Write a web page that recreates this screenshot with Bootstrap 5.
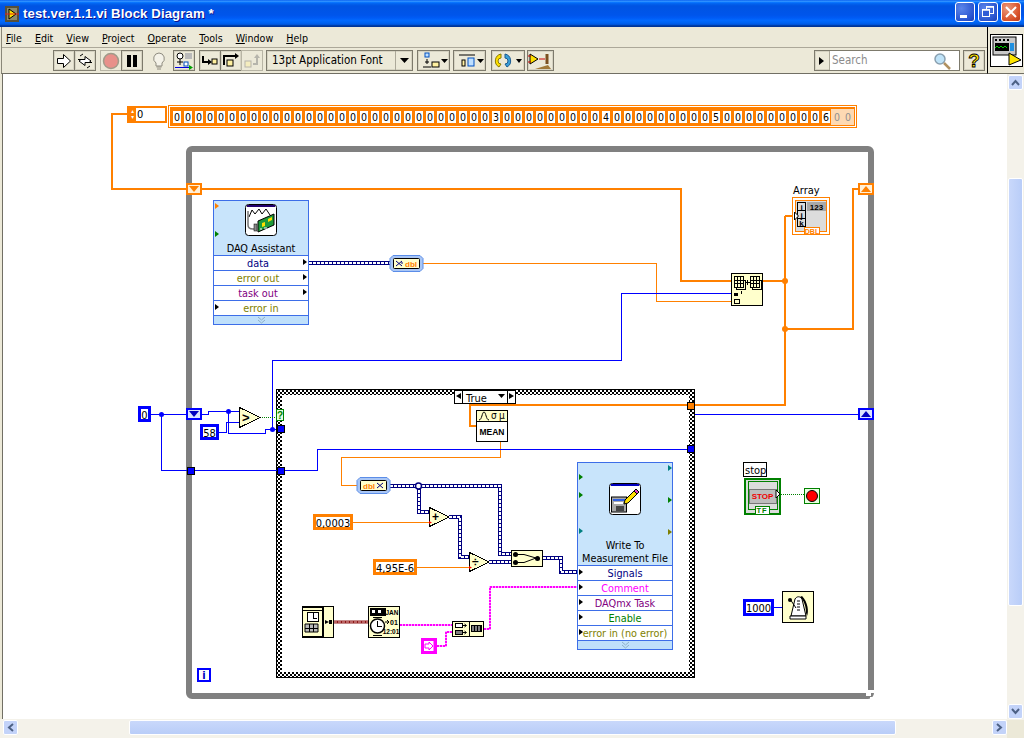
<!DOCTYPE html>
<html lang="en">
<head>
<meta charset="UTF-8">
<title>test.ver.1.1.vi Block Diagram *</title>
<link rel="stylesheet" href="https://cdn.jsdelivr.net/npm/bootstrap@5.3.0/dist/css/bootstrap.min.css">
<style>
  html, body { margin: 0; height: 100%; overflow: hidden; background: #ece9d8; }
  body { font-family: "DejaVu Sans Condensed", "Liberation Sans", Arial, sans-serif; font-size: 10.5px; color: #000; }
  .lv-window { width: 1024px; height: 738px; }

  /* title bar */
  .lv-title { height: 27px; padding: 0 3px 0 5px; background: linear-gradient(180deg,#0058ee 0%,#3593ff 4%,#288eff 6%,#127dff 8%,#036ffc 10%,#0262ee 14%,#0057e5 20%,#0054e3 24%,#0055eb 56%,#005bf5 66%,#026afe 76%,#0062ef 86%,#0052d6 92%,#0040ab 94%,#003092 100%); }
  .lv-title-text { font-family: "Liberation Sans", Arial, sans-serif; color: #fff; font-weight: 700; font-size: 13.2px; margin-left: 4px; text-shadow: 1px 1px 0 #0f1089; letter-spacing: .1px; }
  .win-btns { gap: 3px; margin-top: -3px; }
  .win-btn { width: 20px; height: 20px; border: 1px solid #fff; border-radius: 3px; background: radial-gradient(circle at 30% 30%, #5b85ea, #2a55d0 70%, #1c3eb4); }
  .win-btn-close { background: radial-gradient(circle at 30% 30%, #ea9a7d, #d9532c 65%, #b8381a); }

  /* menu and toolbar */
  .lv-chrome { border-left: 1px solid #8a8778; border-bottom: 1px solid #716f64; margin-left: 1px; }
  .lv-menu { height: 21px; padding: 3px 0 0 4px; gap: 13px; font-size: 10.6px; border-bottom: 1px solid #aca899; }
  .lv-tools { height: 25px; padding: 2px 0 0 51px; }
  .tb-btn { width: 22px; height: 21px; border: 1px solid #7d7a6c; box-shadow: inset 0 0 0 1px #d6d3c2; margin-right: -1px; flex: none; overflow: hidden; }
  .tb-flat { border-color: #b8b5a5; box-shadow: none; }
  .tb-none { border-color: transparent; box-shadow: none; }
  .tb-wide { width: 33px; }
  .tb-w34 { width: 34px; }
  .tb-w27 { width: 27px; }
  .sp3 { margin-left: 3px; } .sp4 { margin-left: 4px; } .sp5 { margin-left: 5px; } .sp6 { margin-left: 6px; }
  .tb-font { width: 147px; padding-left: 5px; font-size: 11.5px; }
  .tb-font-arrow { width: 17px; height: 100%; border-left: 1px solid #aca899; margin-left: auto; }
  .tb-search { width: 146px; margin-left: 261px; }
  .tb-search-tab { width: 15px; border-right: 1px solid #aca899; }
  .tb-search-field { background: #fff; color: #8b8b8b; padding-left: 2px; font-size: 11.5px; }
  .lv-pane { width: 37px; border-left: 1px solid #000; padding: 7px 0 0 2px; border-bottom: 1px solid #716f64; }
  .lv-pane-box { width: 33px; height: 33px; background: #fff; border: 1px solid #000; }

  /* scroll bars */
  .sb-track { background: #f4f2ea; }
  .sb-v { width: 17px; padding: 1px 1px 0 1px; }
  .sb-h { height: 19px; padding: 1px 0 0 3px; }
  .sb-arrow { width: 15px; height: 15px; flex: none; border-radius: 2px; border: 1px solid #fff; background: #c3d3f9; }
  .sb-thumb-v { width: 15px; height: 428px; margin-top: 88px; border-radius: 2px; border: 1px solid #fff; background: linear-gradient(90deg,#c9d8fb,#b9cdf8); }
  .sb-thumb-h { width: 767px; height: 15px; margin-left: 111px; border-radius: 2px; border: 1px solid #fff; background: linear-gradient(180deg,#c9d8fb,#b9cdf8); }
  .sb-corner { width: 17px; background: #ece9d8; }

  /* diagram: a free canvas, children use screen coordinates */
  .lv-canvas { background: #fff; border-left: 1px solid #716f64; margin-left: 2px; }
  .lv-layer { position: absolute; left: -3px; top: -74px; width: 1024px; height: 738px; }
  .lv-layer svg { display: block; }
  .lv-layer text { font-family: "DejaVu Sans Condensed", "Liberation Sans", Arial, sans-serif; font-size: 11px; }
  .lv-layer text.sm { font-family: "Liberation Sans", Arial, sans-serif; font-weight: 700; }

  .w1 { fill: none; stroke-width: 1; shape-rendering: crispEdges; }
  .w-blue { stroke: #0000ff; }
  .w-or { stroke: #ff8000; }
  .w-or2 { fill: none; stroke: #ff8000; stroke-width: 2; shape-rendering: crispEdges; }
  .w-navy { fill: none; stroke: #00007f; stroke-width: 4; shape-rendering: crispEdges; }
  .w-navy-in { fill: none; stroke: #fff; stroke-width: 2; stroke-dasharray: 3 1; shape-rendering: crispEdges; }
  .w-pink-bg { fill: none; stroke: #ffa8ff; stroke-width: 2; shape-rendering: crispEdges; }
  .w-pink { fill: none; stroke: #ff00ff; stroke-width: 2; stroke-dasharray: 2 1; shape-rendering: crispEdges; }
  .w-green { fill: none; stroke: #008000; stroke-width: 1; stroke-dasharray: 1 1; shape-rendering: crispEdges; }
  .vi { fill: #ffffcc; stroke: #000; stroke-width: 1; shape-rendering: crispEdges; }
  .ln { fill: none; stroke: #000; stroke-width: 1; shape-rendering: crispEdges; }
  .k-blue { fill: #fff; stroke: #0000ff; stroke-width: 3; shape-rendering: crispEdges; }
  .k-or { fill: #fff; stroke: #ff8000; stroke-width: 3; shape-rendering: crispEdges; }

  #arr-index { position: absolute; left: 127px; top: 106px; width: 40px; height: 17px; border: 2px solid #ff8000; background: #fff; }
  .arr-spin { width: 7px; background: #ff8000; color: #fff; font-size: 6px; line-height: 6px; }
  .arr-val { padding-left: 1px; font-size: 11px; line-height: 13px; }
  #arr-strip { position: absolute; left: 168px; top: 105px; width: 689px; height: 23px; border: 1px solid #ff8000; padding: 1px; background: #fff; }
  .arr-inner { height: 100%; background: #ff8000; padding: 4px 0 0 3px; gap: 3px; }
  .arr-cell { width: 8px; height: 12px; flex: none; background: #fff; font-size: 10.5px; line-height: 12px; text-align: center; }
  .arr-cell-dim { background: #fdd9b3; color: #8f8f8f; box-shadow: 0 0 0 2px #fdd9b3; }

  .ex-node { position: absolute; width: 96px; border: 1px solid #3d6ee8; background: #c8e4fb; }
  #ex-daq { left: 213px; top: 200px; }
  #ex-write { left: 577px; top: 462px; }
  .ex-head { position: relative; text-align: center; font-size: 10.8px; line-height: 13px; white-space: nowrap; }
  #ex-daq .ex-head { height: 54px; padding-top: 41px; }
  #ex-write .ex-head { height: 102px; padding-top: 76px; }
  .ex-row { position: relative; height: 15px; background: #fff; border-top: 1px solid #3d6ee8; font-size: 10.8px; line-height: 16px; text-align: center; white-space: nowrap; }
  .ex-row-out { padding-right: 6px; }
  .ex-foot { height: 9px; border-top: 1px solid #3d6ee8; background: #bfe0fb; }
  .t-navy { color: #00007f; } .t-olive { color: #7f7f00; } .t-purple { color: #7f007f; } .t-magenta { color: #ff00ff; } .t-green { color: #008000; }
  .tri-l, .tri-r { position: absolute; top: 3px; width: 0; height: 0; border-top: 3px solid transparent; border-bottom: 3px solid transparent; }
  .tri-l { left: 1px; border-left: 4px solid #000; }
  .tri-r { right: 1px; border-left: 4px solid #000; }
</style>
</head>
<body>
<div class="lv-window d-flex flex-column">

  <!-- title bar -->
  <div class="lv-title d-flex align-items-center">
    <svg width="14" height="16" viewBox="0 0 14 16"><rect width="14" height="16" fill="#57503a"/><rect x="2" y="2" width="10" height="12" fill="#8a8a70"/><path d="M4 3l7 5-7 5z" fill="#ffe600" stroke="#000"/><path d="M0 8h14" stroke="#e02020"/></svg>
    <span class="lv-title-text">test.ver.1.1.vi Block Diagram *</span>
    <div class="win-btns d-flex ms-auto">
      <div class="win-btn"><svg width="18" height="18"><rect x="4" y="12" width="7" height="3" fill="#fff"/></svg></div>
      <div class="win-btn"><svg width="18" height="18" fill="none" stroke="#fff"><rect x="7.500" y="3.500" width="7" height="7" stroke-width="1"/><rect x="3.500" y="6.500" width="7" height="7" fill="#2f5bd6" stroke-width="1"/><path d="M7 4h8M4 7h7" stroke-width="1.500"/></svg></div>
      <div class="win-btn win-btn-close"><svg width="18" height="18" fill="none" stroke="#fff" stroke-width="2"><path d="M4 4l10 10M14 4L4 14"/></svg></div>
    </div>
  </div>

  <!-- menu and toolbar with the connector pane at the right -->
  <div class="d-flex">
    <div class="lv-chrome flex-grow-1">
      <div class="lv-menu d-flex align-items-center">
        <span><u>F</u>ile</span><span><u>E</u>dit</span><span><u>V</u>iew</span><span><u>P</u>roject</span><span><u>O</u>perate</span><span><u>T</u>ools</span><span><u>W</u>indow</span><span><u>H</u>elp</span>
      </div>
      <div class="lv-tools d-flex">
        <div class="tb-btn"><svg width="20" height="20"><path d="M3.500 7.500h6v-4l7 6.500-7 6.500v-4h-6z" fill="#fff" stroke="#000"/></svg></div>
        <div class="tb-btn"><svg width="20" height="20"><path d="M3 8.500h7v-3l6 4.500-2 1.500M17 11.500h-7v3l-6-4.500 2-1.500" fill="#fff" stroke="#000"/><path d="M5 5l3-2M15 15l-3 2" stroke="#000"/></svg></div>
        <div class="tb-btn tb-flat sp5"><svg width="20" height="20"><circle cx="10" cy="10" r="7.500" fill="#e8908a" stroke="#a09b8a" stroke-width="1.500"/></svg></div>
        <div class="tb-btn"><svg width="20" height="20"><rect x="5" y="4" width="4" height="12" fill="#000"/><rect x="11" y="4" width="4" height="12" fill="#000"/></svg></div>
        <div class="tb-btn tb-none sp6"><svg width="20" height="20"><path d="M10 2a5.500 5.500 0 0 0-3 10v3h6v-3a5.500 5.500 0 0 0-3-10z" fill="#f4f2e8" stroke="#8f8c80"/><path d="M7.500 16h5M8 18h4" stroke="#8f8c80"/></svg></div>
        <div class="tb-btn sp4"><svg width="20" height="20"><circle cx="6" cy="5" r="3" fill="#fff" stroke="#000"/><path d="M6 8v6M3 11h6" stroke="#000"/><rect x="11" y="2" width="7" height="6" fill="#b9b9b9"/><rect x="10" y="11" width="4" height="4" fill="#fff" stroke="#0050c0"/><path d="M1 16.500h15" stroke="#0000e0"/><path d="M15 14l4 2.500-4 2.500z" fill="#00a000"/></svg></div>
        <div class="tb-btn sp5"><svg width="20" height="20"><path d="M3 5v6h6" fill="none" stroke="#000" stroke-width="2"/><path d="M8 8l4 3-4 3z"/><rect x="12" y="8" width="5" height="5" fill="#fff0a0" stroke="#000"/></svg></div>
        <div class="tb-btn"><svg width="20" height="20"><path d="M3 14V5h11" fill="none" stroke="#000" stroke-width="2"/><path d="M14 2l4 3-4 3z"/><rect x="6" y="9" width="6" height="6" fill="#fff0a0" stroke="#000"/></svg></div>
        <div class="tb-btn tb-flat"><svg width="20" height="20" opacity=".45"><rect x="3" y="10" width="6" height="6" fill="#fff0a0" stroke="#777"/><path d="M11 13h4V6" fill="none" stroke="#777" stroke-width="2"/><path d="M12 7l3-4 3 4z" fill="#777"/></svg></div>
        <div class="tb-btn tb-font sp4 d-flex align-items-center">13pt Application Font
          <div class="tb-font-arrow d-flex align-items-center justify-content-center"><svg width="9" height="5"><path d="M0 0h9L4.500 5z"/></svg></div>
        </div>
        <div class="tb-btn tb-wide sp5 ps-1"><svg width="26" height="20"><rect x="3" y="2" width="4" height="4" fill="#bfe0ff" stroke="#0050c0"/><path d="M5 8v5M3 11h4" stroke="#000"/><rect x="10" y="11" width="7" height="5" fill="#fff0a0" stroke="#000"/><path d="M1 16h8" stroke="#000"/><path d="M19 8h7l-3.500 4z"/></svg></div>
        <div class="tb-btn tb-wide sp4 ps-1"><svg width="26" height="20"><path d="M1 4h16" stroke="#000"/><rect x="4" y="9" width="3" height="6" fill="#fff0a0" stroke="#000"/><rect x="10" y="7" width="6" height="8" fill="#bfe0ff" stroke="#0050c0"/><path d="M19 8h7l-3.500 4z"/></svg></div>
        <div class="tb-btn tb-w34 sp6"><svg width="31" height="20"><path d="M9 3a7 7 0 0 0-2 13l2-3a3 3 0 0 1 0-6z" fill="#ffe000" stroke="#8a7a00"/><path d="M13 3a7 7 0 0 1 2 13l-2-3a3 3 0 0 0 0-6z" fill="#3aa0d8" stroke="#1a5a90"/><path d="M24 8h6l-3 4z"/></svg></div>
        <div class="tb-btn tb-w27 sp3"><svg width="25" height="20"><path d="M2 3l8 5-8 5z" fill="#ffe000" stroke="#000"/><path d="M0 5h3M0 11h3" stroke="#c00"/><path d="M11 8h6" stroke="#c00"/><path d="M7 18l13-4 3 4z" fill="#a07838"/><path d="M19 3v10" stroke="#7a5020" stroke-width="3"/></svg></div>
        <div class="tb-btn tb-search d-flex">
          <div class="tb-search-tab d-flex align-items-center justify-content-center"><svg width="6" height="8"><path d="M0 0l5 4-5 4z"/></svg></div>
          <div class="tb-search-field flex-grow-1 d-flex align-items-center">Search
            <svg class="ms-auto me-2" width="18" height="18"><circle cx="7" cy="7" r="5" fill="#bfe3f8" stroke="#8aa0b0" stroke-width="1.500"/><path d="M11 11l6 6" stroke="#b09060" stroke-width="2.500"/></svg>
          </div>
        </div>
        <div class="tb-btn sp4 d-flex align-items-center justify-content-center"><svg width="18" height="19"><text x="9" y="16" text-anchor="middle" font-family="Liberation Sans" font-weight="700" font-size="19" fill="#ffe600" stroke="#000" stroke-width=".9">?</text></svg></div>
      </div>
    </div>
    <div class="lv-pane">
      <div class="lv-pane-box"><svg width="31" height="31"><rect x="2" y="2" width="23" height="18" fill="#c8c8c8" stroke="#000"/><rect x="4" y="8" width="14" height="8" fill="#000"/><path d="M4 13l2-2 2 2 2-2 2 2 2-2 2 2" fill="none" stroke="#00d000"/><rect x="19" y="8" width="4" height="8" fill="#2090e0"/><path d="M4 5h2M8 5h2M12 5h2M16 5h2" stroke="#000" stroke-width="2"/><path d="M18 18l12 7-12 5z" fill="#ffe600" stroke="#000"/></svg></div>
    </div>
  </div>

  <!-- block diagram -->
  <div class="d-flex flex-grow-1 overflow-hidden">
    <div class="lv-canvas flex-grow-1 position-relative overflow-hidden">
      <div class="lv-layer">
        <svg width="1024" height="738" viewBox="0 0 1024 738">
          <defs>
            <pattern id="chk" width="4" height="4" patternUnits="userSpaceOnUse"><rect width="4" height="4" fill="#fff"/><rect width="2" height="2" fill="#000"/><rect x="2" y="2" width="2" height="2" fill="#000"/></pattern>
            <path id="arr-a" d="M309 263H392"/>
            <path id="arr-b" d="M390 486H500V554H511"/>
            <path id="arr-c" d="M419 486V512H429"/>
            <path id="arr-d" d="M449 517H460V557H469"/>
            <path id="arr-e" d="M489 562H511"/>
            <path id="arr-f" d="M543 558H561V572H577"/>
            <path id="str-a" d="M400 625H452M484 629H490V587H577M437 646H446V632H452"/>
          </defs>

          <!-- while loop -->
          <rect x="189" y="149" width="682" height="547" rx="3" fill="none" stroke="#808080" stroke-width="6"/>
          <path d="M866 690h8v3h-3v3h-5zM870 699h4v-2h-4z" fill="#fff"/>

          <!-- case structure -->
          <rect x="279" y="392" width="413" height="283" fill="none" stroke="url(#chk)" stroke-width="6"/>
          <rect x="276.500" y="389.500" width="418" height="288" fill="none" stroke="#000" shape-rendering="crispEdges"/>

          <!-- orange wires -->
          <path class="w-or2" d="M127 114H112V189H681V281H731"/>
          <path class="w-or2" d="M763 281H785M785 216V405H695M785 216H794M785 329H853V189H858"/>
          <path class="w-or2" d="M687 405H470V426H476"/>
          <path class="w1 w-or" d="M423 263.500H656.500V301.500H731"/>
          <path class="w1 w-or" d="M500.500 441V457.500H341.500V485.500H357"/>
          <path class="w1 w-or" d="M353 522.500H429M417 567.500H469"/>

          <!-- blue wires -->
          <path class="w1 w-blue" d="M151 414.500H186M202 414.500H208.500V411.500H239"/>
          <path class="w1 w-blue" d="M161.500 414V470.500H317.500V449.500H687"/>
          <path class="w1 w-blue" d="M219 432.500H226.500V422.500H239"/>
          <path class="w1 w-blue" d="M228.500 412V433.500H265.500V429.500H276"/>
          <path class="w1 w-blue" d="M272.500 429V360.500H621.500V293.500H731"/>
          <path class="w1 w-blue" d="M695 414.500H858M774 607.500H782"/>
          <circle cx="161.500" cy="414.500" r="2.500" fill="#0000ff"/>
          <circle cx="228.500" cy="411.500" r="2.500" fill="#0000ff"/>
          <circle cx="272.500" cy="429.500" r="2.500" fill="#0000ff"/>
          <path class="w-green" d="M260 417.500H276M781 494.500H804"/>

          <!-- array wires -->
          <use href="#arr-a" class="w-navy"/><use href="#arr-a" class="w-navy-in"/>
          <use href="#arr-b" class="w-navy"/><use href="#arr-c" class="w-navy"/><use href="#arr-d" class="w-navy"/><use href="#arr-e" class="w-navy"/><use href="#arr-f" class="w-navy"/>
          <use href="#arr-b" class="w-navy-in"/><use href="#arr-c" class="w-navy-in"/><use href="#arr-d" class="w-navy-in"/><use href="#arr-e" class="w-navy-in"/><use href="#arr-f" class="w-navy-in"/>
          <circle cx="418.500" cy="486" r="3" fill="#fff" stroke="#00007f" stroke-width="1.500"/>

          <!-- string and timestamp wires -->
          <use href="#str-a" class="w-pink-bg"/><use href="#str-a" class="w-pink"/>
          <path d="M334 622H368" fill="none" stroke="#8b1616" stroke-width="3"/>
          <path d="M334 622H368" fill="none" stroke="#e8b0b0" stroke-width="1" stroke-dasharray="3 1"/>
          <circle cx="785" cy="281" r="3" fill="#ff8000"/><circle cx="785" cy="329" r="3" fill="#ff8000"/>

          <!-- shift registers and tunnels -->
          <rect x="187" y="184" width="14" height="10" fill="#fff0d8" stroke="#ff8000" stroke-width="2" shape-rendering="crispEdges"/><path d="M189 186h10l-5 6z" fill="#ff8000"/>
          <rect x="859" y="184" width="14" height="10" fill="#fff0d8" stroke="#ff8000" stroke-width="2" shape-rendering="crispEdges"/><path d="M861 192h10l-5-6z" fill="#ff8000"/>
          <rect x="187" y="409" width="14" height="10" fill="#dbe4ff" stroke="#0000ff" stroke-width="2" shape-rendering="crispEdges"/><path d="M189 411h10l-5 6z" fill="#0000c0"/>
          <rect x="859" y="409" width="14" height="10" fill="#dbe4ff" stroke="#0000ff" stroke-width="2" shape-rendering="crispEdges"/><path d="M861 417h10l-5-6z" fill="#0000c0"/>
          <rect x="187.500" y="467.500" width="7" height="7" fill="#0000ff" stroke="#000" shape-rendering="crispEdges"/>
          <rect x="277.500" y="467.500" width="7" height="7" fill="#0000ff" stroke="#000" shape-rendering="crispEdges"/>
          <rect x="277.500" y="425.500" width="7" height="7" fill="#0000ff" stroke="#000" shape-rendering="crispEdges"/>
          <rect x="687.500" y="445.500" width="7" height="7" fill="#0000ff" stroke="#000" shape-rendering="crispEdges"/>
          <rect x="687.500" y="402.500" width="7" height="7" fill="#ff8000" stroke="#000" shape-rendering="crispEdges"/>

          <!-- iteration terminal -->
          <rect x="198" y="669" width="12" height="12" fill="#fff" stroke="#0000ff" stroke-width="2" shape-rendering="crispEdges"/>
          <text x="204" y="679" text-anchor="middle" fill="#0000c0" font-weight="700">i</text>

          <!-- case selector -->
          <rect x="454.500" y="390.500" width="61" height="13" fill="#fff" stroke="#000" shape-rendering="crispEdges"/>
          <path class="ln" d="M462.500 390v14M507.500 390v14"/>
          <path d="M461 393v6l-5-3zM509 393v6l5-3z"/><path d="M498 394h7l-3.500 4z"/>
          <text x="466" y="401.500">True</text>

          <!-- DAQ convert node -->
          <path d="M393 255.500h27l3 3v10l-3 3h-27l-3-3v-10z" fill="#a9c6f5" stroke="#5b8de8"/>
          <rect x="393.500" y="258.500" width="26" height="10" rx="1" fill="#ffffcc" stroke="#000"/>
          <path d="M396 261l3 2.500 3-2.500M396 266l3-2.500 3 2.500M403 263h-2" fill="none" stroke="#00007f"/>
          <text class="sm" x="405" y="267" fill="#ff8000" style="font-size:8px">dbl</text>

          <path d="M360 477.500h27l3 3v10l-3 3h-27l-3-3v-10z" fill="#a9c6f5" stroke="#5b8de8"/>
          <rect x="360.500" y="480.500" width="26" height="10" rx="1" fill="#ffffcc" stroke="#000"/>
          <text class="sm" x="363" y="489" fill="#ff8000" style="font-size:8px">dbl</text>
          <path d="M377 483l3 2.500 3-2.500M377 488l3-2.500 3 2.500" fill="none" stroke="#00007f"/>

          <!-- replace array subset style node -->
          <rect class="vi" x="731.500" y="273.500" width="31" height="32"/>
          <path class="ln" d="M734.500 276.500h9v11h-9zM734.500 280.500h9M734.500 283.500h9M737.500 276.500v11M740.500 276.500v11M736.500 287.500v2h9v-2M743.500 280.500h2v9"/>
          <path class="ln" d="M750.500 276.500h9v11h-9zM750.500 280.500h9M750.500 283.500h9M753.500 276.500v11M756.500 276.500v11M752.500 287.500v2h9v-2M759.500 280.500h2v9"/>
          <path d="M745 282.500h5M747.500 280v5" stroke="#000" shape-rendering="crispEdges"/>
          <rect x="734" y="293" width="4" height="3"/><path class="ln" d="M741.500 294v-3"/>
          <rect class="ln" x="734.500" y="299.500" width="5" height="4"/>

          <!-- array indicator -->
          <text x="793" y="194">Array</text>
          <rect x="792.500" y="197.500" width="37" height="37" fill="#fff" stroke="#ff8000" shape-rendering="crispEdges"/>
          <rect x="795.500" y="200.500" width="31" height="31" fill="#dcdcdc" stroke="#ff8000" shape-rendering="crispEdges"/>
          <g shape-rendering="crispEdges"><rect x="797.500" y="202.500" width="8" height="8" fill="#dcdcdc" stroke="#000"/><rect x="797.500" y="210.500" width="8" height="8" fill="#dcdcdc" stroke="#000"/><rect x="797.500" y="218.500" width="8" height="8" fill="#dcdcdc" stroke="#000"/><rect x="807" y="202" width="19" height="9" fill="#a8a8a8"/></g>
          <text class="sm" x="801.500" y="210" text-anchor="middle" style="font-size:8px">i</text><text class="sm" x="801.500" y="218" text-anchor="middle" style="font-size:8px">j</text><text class="sm" x="801.500" y="226" text-anchor="middle" style="font-size:8px">k</text>
          <text class="sm" x="816.500" y="209.500" text-anchor="middle" style="font-size:8px">123</text>
          <rect x="804.500" y="227.500" width="15" height="7" fill="#fff" stroke="#ff8000" shape-rendering="crispEdges"/><text class="sm" x="812" y="234" text-anchor="middle" fill="#ff8000" style="font-size:7px">DBL</text>
          <path d="M794.500 212l4 4-4 4z" fill="#fff" stroke="#000"/>

          <!-- constants -->
          <rect class="k-blue" x="139.500" y="407.500" width="10" height="13"/><text x="144.500" y="418.500" text-anchor="middle">0</text>
          <rect class="k-blue" x="201.500" y="425.500" width="16" height="13"/><text x="209.500" y="436.500" text-anchor="middle">58</text>
          <rect class="k-or" x="314.500" y="515.500" width="37" height="13"/><text x="333" y="526.500" text-anchor="middle">0,0003</text>
          <rect class="k-or" x="374.500" y="560.500" width="41" height="13"/><text x="395" y="571.500" text-anchor="middle">4,95E-6</text>
          <rect class="k-blue" x="744.500" y="600.500" width="28" height="14"/><text x="758.500" y="612" text-anchor="middle">1000</text>
          <rect x="422.500" y="639.500" width="13" height="13" fill="#fff" stroke="#ff00ff" stroke-width="3" shape-rendering="crispEdges"/>
          <path d="M425 644h4v-2l4 4-4 4v-2h-4zM434 641v10" fill="none" stroke="#ff00ff"/>

          <!-- comparator, add, divide -->
          <path class="vi" d="M239.500 407.500L260 417.500L239.500 427.500z"/><text class="sm" x="242" y="422" style="font-size:13px">&gt;</text>
          <path class="vi" d="M429.500 507.500L449 517L429.500 526.500z"/><text class="sm" x="432" y="521" style="font-size:12px">+</text>
          <path class="vi" d="M469.500 552.500L489 562L469.500 571.500z"/><text class="sm" x="472" y="566" style="font-size:12px">÷</text>
          <path d="M429 521l3 1.500-3 1.500zM469 566l3 1.500-3 1.500z" fill="#ff0000"/>

          <!-- conditional terminal -->
          <rect x="276.500" y="409.500" width="7" height="11" fill="#e8ffe0" stroke="#008000" shape-rendering="crispEdges"/><text class="sm" x="280" y="419" text-anchor="middle" fill="#008000" style="font-size:10px">?</text>

          <!-- statistics node -->
          <rect class="vi" x="476.500" y="410.500" width="31" height="31"/>
          <rect x="477" y="422" width="30" height="19" fill="#fff"/><path class="ln" d="M476.500 421.500h31"/>
          <path d="M479 420c3 0 3-8 5-8s2 8 5 8" fill="none" stroke="#000"/>
          <text x="491" y="419" style="font-size:10px">σ</text><text x="499" y="419" style="font-size:10px">μ</text>
          <text class="sm" x="492" y="435" text-anchor="middle" style="font-size:8.500px">MEAN</text>

          <!-- merge signals -->
          <rect class="vi" x="511.500" y="550.500" width="31" height="16"/>
          <path d="M516 554.500h8l12 3.500-12 4.500h-8" fill="none" stroke="#000"/>
          <circle cx="515.500" cy="554.500" r="2.500"/><circle cx="515.500" cy="562.500" r="2.500"/><circle cx="537.500" cy="558.500" r="2.500"/>

          <!-- timing nodes -->
          <rect class="vi" x="302.500" y="606.500" width="31" height="31"/>
          <path class="ln" d="M303 607.500h20v29h-20M303 610.500h20M322.500 607v30"/>
          <rect x="307.500" y="612.500" width="11" height="9" fill="#fff" stroke="#000" shape-rendering="crispEdges"/><path class="ln" d="M313.500 613v5h3"/>
          <path d="M305 624h13v8h-13z" fill="#b8b8b8" stroke="#000"/><path class="ln" d="M305 628h13M309 624v8M313 624v8"/>
          <path d="M325 620l4 2-4 2z"/><rect x="329" y="620" width="3" height="4"/>
          <rect class="vi" x="368.500" y="606.500" width="31" height="31"/>
          <rect x="370" y="608" width="16" height="8" fill="#000"/><path d="M372 610h3v3h-3zM378 610h3v3h-3z" fill="#fff"/>
          <circle cx="377.500" cy="626" r="7" fill="#fff" stroke="#000" stroke-width="1.500"/><path class="ln" d="M377.500 621v5h4M373 617h9M373 635h9"/>
          <text class="sm" x="392" y="615" text-anchor="middle" style="font-size:6.500px">JAN</text>
          <text class="sm" x="394" y="624.500" text-anchor="middle" style="font-size:7px">01</text>
          <text class="sm" x="391" y="634" text-anchor="middle" style="font-size:6.500px">12:01</text>
          <path d="M385 622h4M387 620l2 2-2 2" fill="none" stroke="#000"/>
          <rect class="vi" x="452.500" y="621.500" width="31" height="15"/>
          <path class="ln" d="M469.500 622v15"/>
          <rect x="455.500" y="623.500" width="7" height="4" fill="#fff" stroke="#000" shape-rendering="crispEdges"/><rect x="455.500" y="630.500" width="7" height="4" fill="#808080" stroke="#000" shape-rendering="crispEdges"/>
          <path d="M463 625.500h3M464.500 624l2 1.500-2 1.500M463 632.500h3M464.500 631l2 1.500-2 1.500" fill="none" stroke="#000"/>
          <rect x="471" y="625" width="11" height="7" fill="#000"/><path d="M473 626v5M476 626v5M479 626v5" stroke="#fff"/>

          <!-- stop -->
          <rect x="743.500" y="462.500" width="23" height="14" fill="#fff" stroke="#000" shape-rendering="crispEdges"/>
          <text x="745" y="474">stop</text>
          <rect x="744.500" y="478.500" width="35" height="35" fill="#dcdcdc" stroke="#008000" stroke-width="2" shape-rendering="crispEdges"/>
          <rect x="748" y="481" width="29" height="28" fill="#dcdcdc" stroke="#008000" shape-rendering="crispEdges"/>
          <rect x="749" y="489" width="27" height="14" fill="#bdbdbd" stroke="#777" shape-rendering="crispEdges"/>
          <text class="sm" x="762.500" y="499" text-anchor="middle" fill="#f00000" style="font-size:8px">STOP</text>
          <path d="M776 490l4 4-4 4z" fill="#fff" stroke="#000"/>
          <rect x="755" y="506" width="14" height="8" fill="#fff" stroke="#008000" shape-rendering="crispEdges"/>
          <text class="sm" x="762" y="513" text-anchor="middle" fill="#008000" style="font-size:7.500px;letter-spacing:1px">TF</text>
          <rect x="804.500" y="488.500" width="15" height="15" fill="#e8ffe0" stroke="#008000" shape-rendering="crispEdges"/>
          <circle cx="812" cy="496" r="5.500" fill="#ff0000" stroke="#000"/>

          <!-- wait metronome -->
          <rect class="vi" x="782.500" y="591.500" width="31" height="31"/>
          <path d="M791 616l4-17c2-3 5-3 7 0l4 17z" fill="#fff" stroke="#000"/>
          <path d="M800 597c4 3 6 10 6 16l1 3c2-4 1-14-5-20z"/><path d="M790 599l6 9" stroke="#000"/><circle cx="790" cy="600" r="2"/>
          <path d="M797 601h3M797 604h3M797 607h3M797 610h3" stroke="#000"/>
          <path d="M790 616h16v3h-16z" fill="#fff" stroke="#000"/>
        </svg>

        <!-- loop index and constant array -->
        <div id="arr-index" class="d-flex">
          <div class="arr-spin text-center">▴<br>▾</div>
          <div class="arr-val">0</div>
        </div>
        <div id="arr-strip"><div id="arr-inner" class="arr-inner d-flex"></div></div>

        <!-- express VIs -->
        <div id="ex-daq" class="ex-node">
          <div class="ex-head">DAQ Assistant
            <svg class="position-absolute top-0 start-0" width="94" height="54" viewBox="214 201 94 54">
              <path d="M215 203l4 3-4 3z" fill="#ff8000"/><path d="M215 231l4 3-4 3z" fill="#008000"/>
              <rect x="245.500" y="204.500" width="31" height="31" rx="3" fill="#fff" stroke="#000"/>
              <rect x="247" y="205" width="28" height="2" fill="#220070"/>
              <path d="M249 217l3-7 3 4 4-5 3 5 4-5 4 6" fill="none" stroke="#000"/>
              <path d="M248 211v14c0 3 2 4 5 4h3" fill="none" stroke="#777" stroke-width="1.500"/>
              <rect x="254" y="224" width="3" height="7" fill="#888" stroke="#000" stroke-width=".5"/>
              <path d="M258 221l16-7v11l-16 7z" fill="#1e9a3a" stroke="#000"/><path d="M262 223l3-1v4l-3 1zM268 219l4-2v3l-4 2z" fill="#ffe000"/><path d="M260 229h2M264 228h3" stroke="#fff"/>
            </svg>
          </div>
          <div class="ex-row ex-row-out t-navy">data<i class="tri-r"></i></div>
          <div class="ex-row ex-row-out t-olive">error out<i class="tri-r"></i></div>
          <div class="ex-row ex-row-out t-purple">task out<i class="tri-r"></i></div>
          <div class="ex-row t-olive"><i class="tri-l"></i>error in</div>
          <div class="ex-foot d-flex justify-content-center"><svg width="9" height="8"><path d="M1 1l3.500 3L8 1M1 4l3.500 3L8 4" fill="none" stroke="#8fb0c8"/></svg></div>
        </div>
        <div id="ex-write" class="ex-node">
          <div class="ex-head">Write To<br>Measurement File
            <svg class="position-absolute top-0 start-0" width="94" height="102" viewBox="578 463 94 102">
              <path d="M579 474l4 3-4 3zM579 492l4 3-4 3z" fill="#008000"/><path d="M579 528l4 3-4 3z" fill="#008080"/>
              <path d="M668 465l4 3-4 3z" fill="#008080"/><path d="M668 497l4 3-4 3z" fill="#008000"/><path d="M668 529l4 3-4 3z" fill="#7f7f00"/>
              <rect x="609.500" y="483.500" width="31" height="31" rx="3" fill="#fff" stroke="#000"/>
              <rect x="611" y="484" width="28" height="2" fill="#0000c0"/>
              <rect x="611.500" y="497" width="15" height="15" fill="#a8a8a8" stroke="#000"/>
              <rect x="613" y="499" width="12" height="2" fill="#3060e0"/><rect x="614" y="502" width="9" height="2" fill="#fff"/>
              <rect x="616" y="506" width="8" height="5" fill="#444"/>
              <path d="M625 500l9-9 3 3-9 9-4 1z" fill="#ffe000" stroke="#000"/><path d="M634 491l2-2 3 3-2 2z" fill="#e040c0" stroke="#000"/>
            </svg>
          </div>
          <div class="ex-row t-navy"><i class="tri-l"></i>Signals</div>
          <div class="ex-row t-magenta"><i class="tri-l"></i>Comment</div>
          <div class="ex-row t-purple"><i class="tri-l"></i>DAQmx Task</div>
          <div class="ex-row t-green"><i class="tri-l"></i>Enable</div>
          <div class="ex-row t-olive"><i class="tri-l"></i>error in (no error)</div>
          <div class="ex-foot d-flex justify-content-center"><svg width="9" height="8"><path d="M1 1l3.500 3L8 1M1 4l3.500 3L8 4" fill="none" stroke="#8fb0c8"/></svg></div>
        </div>
      </div>
    </div>

    <!-- vertical scroll bar -->
    <div class="sb-track sb-v d-flex flex-column">
      <div class="sb-arrow d-flex align-items-center justify-content-center"><svg width="9" height="7"><path d="M1 6l3.500-4L8 6" fill="none" stroke="#4d6185" stroke-width="2"/></svg></div>
      <div class="sb-thumb-v"></div>
      <div class="sb-arrow mt-auto d-flex align-items-center justify-content-center"><svg width="9" height="7"><path d="M1 1l3.500 4L8 1" fill="none" stroke="#4d6185" stroke-width="2"/></svg></div>
    </div>
  </div>

  <!-- horizontal scroll bar -->
  <div class="sb-track sb-h d-flex">
    <div class="sb-arrow d-flex align-items-center justify-content-center"><svg width="7" height="9"><path d="M6 1L2 4.500 6 8" fill="none" stroke="#4d6185" stroke-width="2"/></svg></div>
    <div class="sb-thumb-h"></div>
    <div class="sb-arrow d-flex align-items-center justify-content-center ms-auto"><svg width="7" height="9"><path d="M1 1l4 3.500L1 8" fill="none" stroke="#4d6185" stroke-width="2"/></svg></div>
    <div class="sb-corner"></div>
  </div>
</div>

<script>
  // constant array: zeros, with a marker every ten places
  const marks = { 29: 3, 39: 4, 49: 5, 59: 6 };
  const inner = document.getElementById("arr-inner");
  for (let i = 0; i < 62; i++) {
    const c = document.createElement("div");
    c.className = i >= 60 ? "arr-cell arr-cell-dim" : "arr-cell";
    c.textContent = marks[i] || 0;
    inner.appendChild(c);
  }
</script>
<script src="https://cdn.jsdelivr.net/npm/bootstrap@5.3.0/dist/js/bootstrap.bundle.min.js"></script>
</body>
</html>
